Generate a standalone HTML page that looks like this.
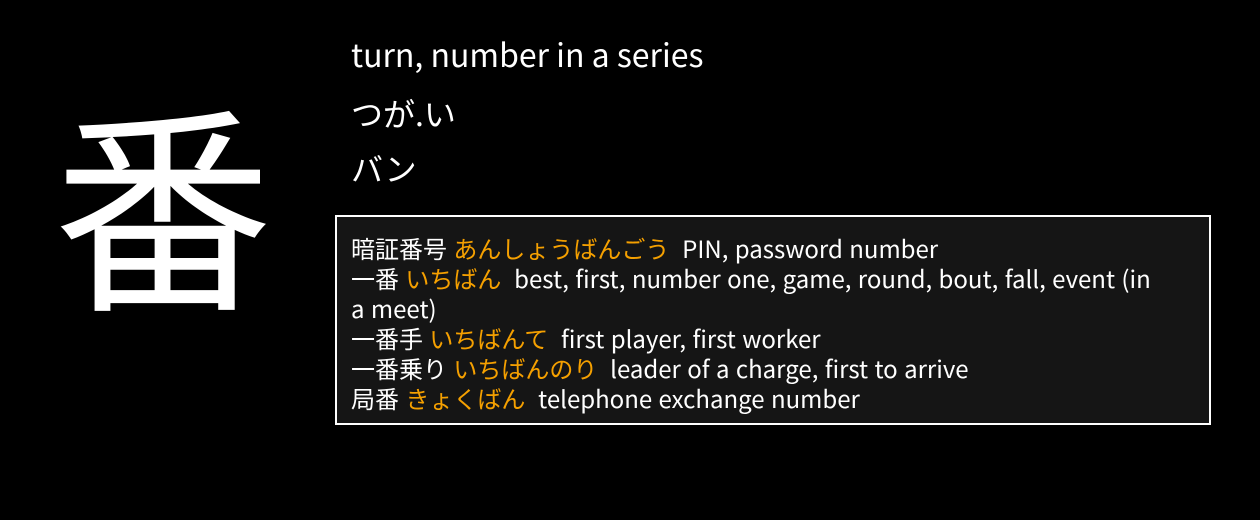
<!DOCTYPE html>
<html><head><meta charset="utf-8"><style>
body{margin:0;background:#000;width:1260px;height:520px;overflow:hidden;color:#fff;font-family:"Noto Sans CJK JP","Liberation Sans",sans-serif;position:relative}
.k{position:absolute;left:53px;top:58px;font-size:220px;line-height:280px;width:220px;text-align:center}
.t{position:absolute;left:351px;font-size:32px;line-height:40px;white-space:nowrap}
.box{position:absolute;left:335px;top:215px;width:872px;height:206px;border:2px solid #fff;background:#151515;box-sizing:content-box}
.in{position:absolute;left:14px;top:16px;width:800px;font-size:24px;line-height:30px;word-spacing:1px}
.o{color:#f5a000}
</style></head><body>
<div class="k">番</div>
<div class="t" style="top:34px">turn, number in a series</div>
<div class="t" style="top:93px">つが.い</div>
<div class="t" style="top:148px">バン</div>
<div class="box"><div class="in">
暗証番号 <span class="o">あんしょうばんごう</span>&nbsp; PIN, password number<br>
一番 <span class="o">いちばん</span>&nbsp; best, first, number one, game, round, bout, fall, event (in a meet)<br>
一番手 <span class="o">いちばんて</span>&nbsp; first player, first worker<br>
一番乗り <span class="o">いちばんのり</span>&nbsp; leader of a charge, first to arrive<br>
局番 <span class="o">きょくばん</span>&nbsp; telephone exchange number
</div></div>
</body></html>
